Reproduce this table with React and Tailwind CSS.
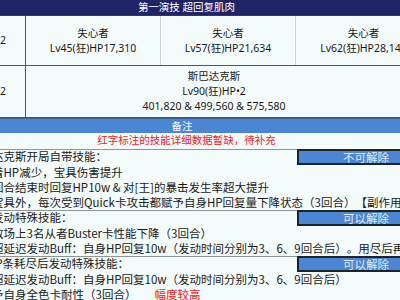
const enemies = [
  { name: '失心者', stat: 'Lv45(狂)HP17,310' },
  { name: '失心者', stat: 'Lv57(狂)HP21,634' },
  { name: '失心者', stat: 'Lv62(狂)HP28,148' },
];

const blocks = [
  {
    title: '斯巴达克斯开局自带技能：',
    status: '不可解除',
    lines: [
      <>①随着HP减少，宝具伤害提升</>,
      <>②每回合结束时回复HP10w &amp; 对[王]的暴击发生率超大提升</>,
      <>
        ③除宝具外，每次受到Quick卡攻击都赋予自身HP回复量下降状态（3回合）【副作用】
        <span className="text-[#f42020]">约10%</span>
      </>,
    ],
  },
  {
    title: '开场发动特殊技能：',
    status: '可以解除',
    lines: [
      <>①使敌场上3名从者Buster卡性能下降（3回合）</>,
      <>②获超延迟发动Buff：自身HP回复10w（发动时间分别为3、6、9回合后）。用尽后再次发动</>,
    ],
  },
  {
    title: '第2HP条耗尽后发动特殊技能：',
    status: '可以解除',
    lines: [
      <>①获超延迟发动Buff：自身HP回复10w（发动时间分别为3、6、9回合后）</>,
      <>
        ②赋予自身全色卡耐性（3回合）
        <span className="ml-[18px] text-[#f42020]">幅度较高</span>
      </>,
    ],
  },
];

function App() {
  return (
    <div className="w-[400px] h-[300px] overflow-hidden bg-[#f4fbfb] text-[10.5px] text-[#1a1a1a] font-['Noto_Sans','Noto_Sans_CJK_SC',sans-serif]">
      <div className="ml-[-29px] w-[460px]">
        {/* 标题栏 */}
        <div className="h-[16px] pr-[29px] bg-[#1f2467] text-white text-center leading-[15px] border-b border-[#3a3a3a]">
          第一演技 超回复肌肉
        </div>

        <div className="flex h-[50px] border-b border-[#555]">
          <div className="w-[55px] flex items-center justify-center border-r border-[#555]">1/2</div>
          {enemies.map((e, i) => (
            <div
              key={i}
              className={`w-[135px] flex flex-col items-center justify-center leading-[15px] ${
                i < 2 ? 'border-r border-[#cdd3d3]' : ''
              }`}
            >
              <span>{e.name}</span>
              <span>{e.stat}</span>
            </div>
          ))}
        </div>

        <div className="flex h-[52px] border-b border-[#555]">
          <div className="w-[55px] flex items-center justify-center border-r border-[#555]">2/2</div>
          <div className="flex-1 flex flex-col items-center justify-center leading-[15px] pr-[29px]">
            <span>斯巴达克斯</span>
            <span>Lv90(狂)HP•2</span>
            <span>401,820 &amp; 499,560 &amp; 575,580</span>
          </div>
        </div>

        {/* 备注 */}
        <div className="h-[15px] pr-[38px] bg-[#4b86d4] text-white text-center leading-[14px] border-t border-[#3b5f8f]">
          备注
        </div>
        <div className="h-[16px] pr-[29px] text-center text-[#f42020] leading-[15px]">
          红字标注的技能详细数据暂缺，待补充
        </div>

        <div className="ml-[-2px] text-[11.5px] font-['Noto_Sans_CJK_SC',sans-serif] [text-spacing-trim:space-all]">
          {blocks.map((b, i) => (
            <div key={i} className="border-t border-[#8e9696] pr-[27px]">
              <div className="flex h-[15px] leading-[12px]">
                <div className="flex-1 whitespace-nowrap">{b.title}</div>
                <div className="w-[136px] shrink-0 bg-[#4b86d4] border-l-2 border-y-2 border-[#222] text-center text-[#e2eaf4] mr-[-29px] mt-[-1px] h-[16px]">
                  {b.status}
                </div>
              </div>
              {b.lines.map((l, j) => (
                <div key={j} className="h-[15px] leading-[15px] whitespace-nowrap">
                  {l}
                </div>
              ))}
            </div>
          ))}
        </div>
      </div>
    </div>
  );
}

export default App;
